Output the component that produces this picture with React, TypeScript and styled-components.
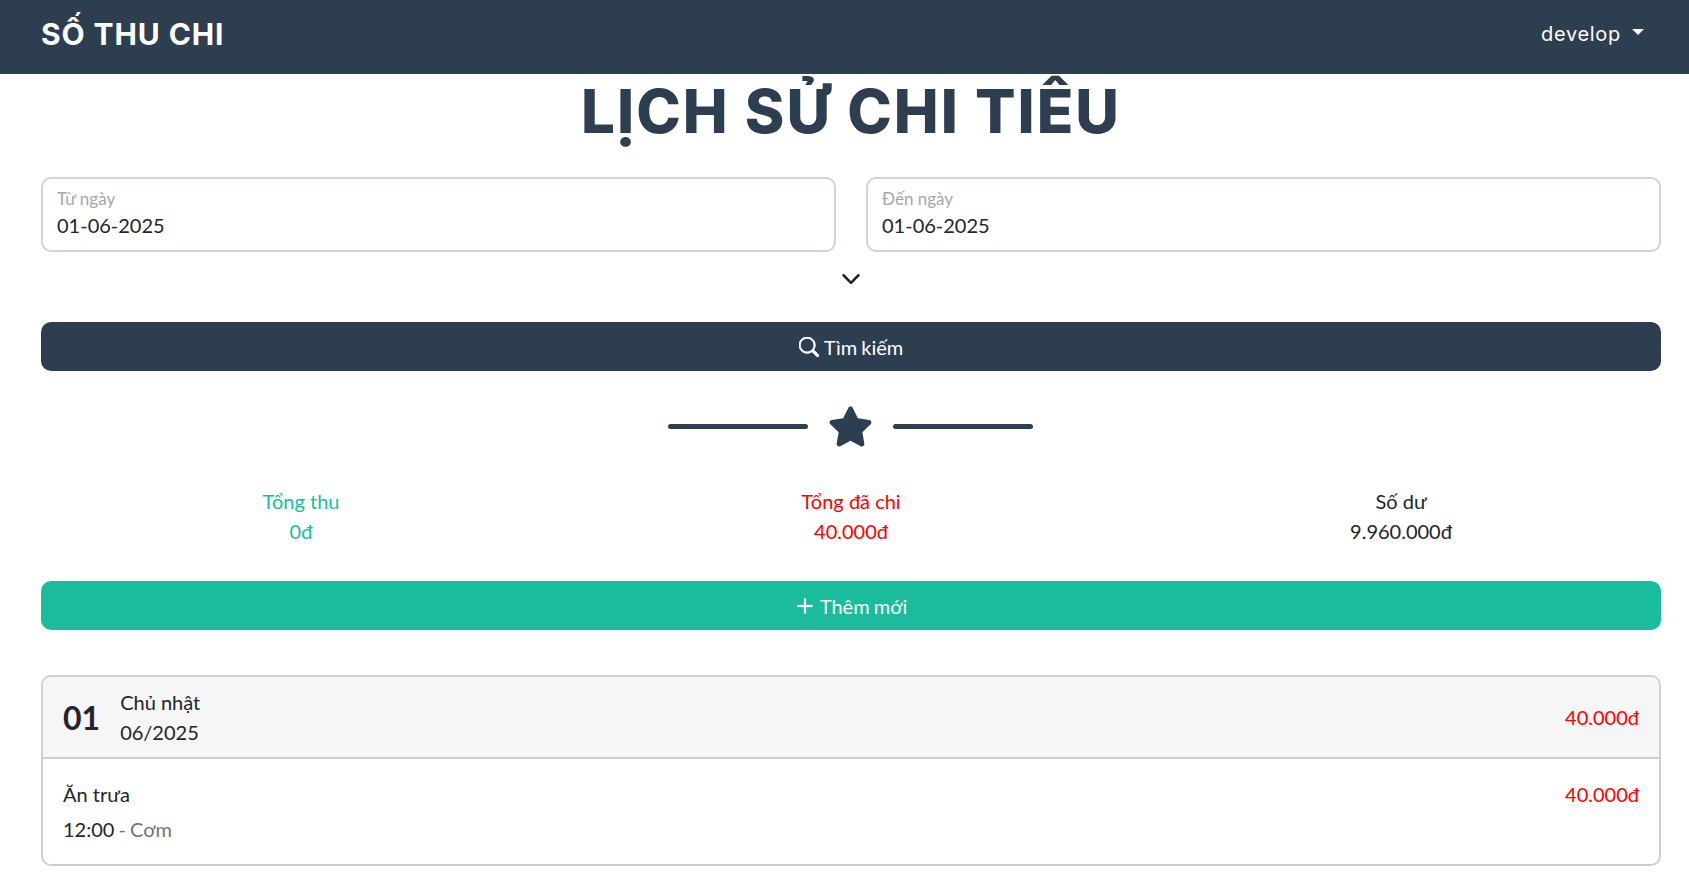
import React from "react";
import styled, { createGlobalStyle } from "styled-components";
import { BsChevronDown, BsPlusLg, BsSearch } from "react-icons/bs";
import { FaStar } from "react-icons/fa";

const GlobalStyle = createGlobalStyle`
  * { box-sizing: border-box; }
  body {
    margin: 0;
    background: #fff;
    color: #212529;
    font-family: Lato, "Noto Sans", sans-serif;
    font-size: 20px;
    line-height: 30px;
  }
`;

const Navbar = styled.nav`
  height: 74px;
  background: #2c3e50;
  color: #fff;
  display: flex;
  align-items: center;
  justify-content: space-between;
  padding: 0 45px 6px 41px;
`;

const Brand = styled.div`
  font-family: Inter, sans-serif;
  font-weight: 700;
  font-size: 30px;
  letter-spacing: 0.9px;
`;

const UserMenu = styled.div`
  display: flex;
  align-items: center;
  gap: 11px;
  font-family: Inter, sans-serif;
  font-size: 20px;
  letter-spacing: 0.7px;
  &::after {
    content: "";
    border-top: 6px solid #fff;
    border-left: 6px solid transparent;
    border-right: 6px solid transparent;
    margin-bottom: 4px;
  }
`;

const Page = styled.main`
  padding: 0 28px 0 41px;
`;

const Title = styled.h1`
  margin: 1px 0 30px;
  text-align: center;
  font-family: Inter, sans-serif;
  font-weight: 800;
  font-size: 60px;
  line-height: 72px;
  letter-spacing: 2px;
  color: #2c3e50;
`;

const DateRow = styled.div`
  display: grid;
  grid-template-columns: 1fr 1fr;
  gap: 30px;
`;

const DateField = styled.div`
  height: 75px;
  border: 2px solid #ced4da;
  border-radius: 10px;
  padding: 8px 14px;
`;

const DateLabel = styled.div`
  font-size: 17px;
  line-height: 24px;
  color: #a6a6a6;
`;

const DateValue = styled.div`
  font-size: 20px;
  line-height: 30px;
  margin-top: -1px;
  color: #212529;
`;

const Expand = styled.div`
  height: 70px;
  display: flex;
  justify-content: center;
  padding-top: 17px;
  font-size: 20px;
`;

const WideButton = styled.button<{ $bg: string }>`
  width: 100%;
  height: 49px;
  border: 0;
  border-radius: 10px;
  background: ${(p) => p.$bg};
  color: #fff;
  font: inherit;
  word-spacing: -1px;
  display: flex;
  align-items: center;
  justify-content: center;
  gap: 5px;
`;

const Divider = styled.div`
  height: 110px;
  display: flex;
  align-items: center;
  justify-content: center;
  gap: 20px;
  padding-right: 2px;
  color: #2c3e50;
`;

const Line = styled.span`
  width: 140px;
  height: 5px;
  border-radius: 3px;
  background: #2c3e50;
`;

const StatRow = styled.div`
  display: grid;
  grid-template-columns: repeat(3, 1fr);
  margin: 0 -15px;
  padding-top: 5px;
  height: 100px;
`;

const Stat = styled.div<{ $color: string }>`
  text-align: center;
  color: ${(p) => p.$color};
`;

const DayCard = styled.section`
  margin-top: 45px;
  height: 191px;
  border: 2px solid #cfcfcf;
  border-radius: 10px;
  overflow: hidden;
`;

const DayHeader = styled.header`
  height: 82px;
  background: #f6f6f6;
  border-bottom: 2px solid #cfcfcf;
  display: flex;
  align-items: center;
  padding: 0 20px;
  gap: 20px;
`;

const DayNumber = styled.div`
  font-size: 32px;
  font-weight: 700;
  padding-top: 1px;
`;

const DayMeta = styled.div`
  flex: 1;
`;

const Money = styled.div`
  color: #f00;
`;

const Entry = styled.div`
  display: flex;
  justify-content: space-between;
  padding: 20px 20px 0;
`;

const EntryTime = styled.div`
  margin-top: 5px;
  word-spacing: -1px;
`;

const Muted = styled.span`
  color: #6c757d;
`;

export default function App() {
  return (
    <>
      <GlobalStyle />
      <Navbar>
        <Brand>SỐ THU CHI</Brand>
        <UserMenu>develop</UserMenu>
      </Navbar>
      <Page>
        <Title>LỊCH SỬ CHI TIÊU</Title>
        <DateRow>
          <DateField>
            <DateLabel>Từ ngày</DateLabel>
            <DateValue>01-06-2025</DateValue>
          </DateField>
          <DateField>
            <DateLabel>Đến ngày</DateLabel>
            <DateValue>01-06-2025</DateValue>
          </DateField>
        </DateRow>
        <Expand>
          <BsChevronDown size={20} strokeWidth={1} />
        </Expand>
        <WideButton $bg="#2c3e50">
          <BsSearch size={20} strokeWidth={0.7} /> Tìm kiếm
        </WideButton>
        <Divider>
          <Line />
          <FaStar size={45} />
          <Line />
        </Divider>
        <StatRow>
          <Stat $color="#18bc9c">
            <div>Tổng thu</div>
            <div>0đ</div>
          </Stat>
          <Stat $color="#f00">
            <div>Tổng đã chi</div>
            <div>40.000đ</div>
          </Stat>
          <Stat $color="#212529">
            <div>Số dư</div>
            <div>9.960.000đ</div>
          </Stat>
        </StatRow>
        <WideButton $bg="#1abc9c">
          <BsPlusLg size={20} strokeWidth={0.8} /> Thêm mới
        </WideButton>
        <DayCard>
          <DayHeader>
            <DayNumber>01</DayNumber>
            <DayMeta>
              <div>Chủ nhật</div>
              <div>06/2025</div>
            </DayMeta>
            <Money>40.000đ</Money>
          </DayHeader>
          <Entry>
            <div>
              <div>Ăn trưa</div>
              <EntryTime>
                12:00 <Muted>- Cơm</Muted>
              </EntryTime>
            </div>
            <Money>40.000đ</Money>
          </Entry>
        </DayCard>
      </Page>
    </>
  );
}
